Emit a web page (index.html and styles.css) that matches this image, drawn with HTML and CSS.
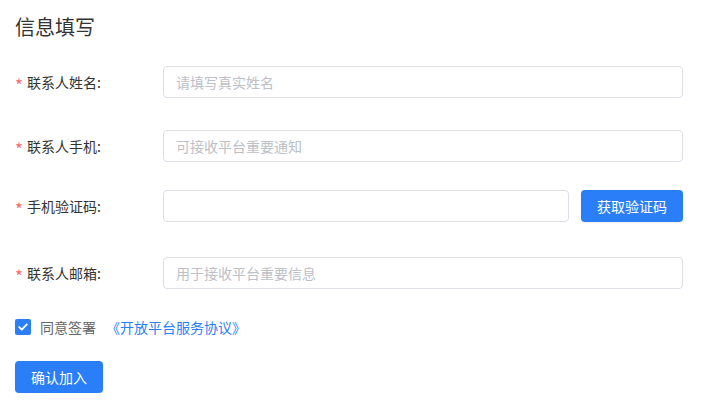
FILE: index.html
```html
<!DOCTYPE html>
<html lang="zh-CN">
<head>
<meta charset="utf-8">
<title>信息填写</title>
<link rel="stylesheet" href="styles.css">
</head>
<body>
<div class="page">
  <h1 class="title">信息填写</h1>
  <form class="form">
    <div class="row row-1">
      <label class="label"><span class="req">*</span>联系人姓名:</label>
      <input class="input" type="text" placeholder="请填写真实姓名">
    </div>
    <div class="row row-2">
      <label class="label"><span class="req">*</span>联系人手机:</label>
      <input class="input" type="text" placeholder="可接收平台重要通知">
    </div>
    <div class="row row-3">
      <label class="label"><span class="req">*</span>手机验证码:</label>
      <div class="code-wrap">
        <input class="input" type="text">
        <button type="button" class="btn btn-code">获取验证码</button>
      </div>
    </div>
    <div class="row row-4">
      <label class="label"><span class="req">*</span>联系人邮箱:</label>
      <input class="input" type="text" placeholder="用于接收平台重要信息">
    </div>
    <div class="agree">
      <span class="checkbox"><svg width="10" height="8" viewBox="0 0 10 8"><path d="M1.2 4.2 L3.8 6.6 L8.8 1.4" fill="none" stroke="#fff" stroke-width="1.8" stroke-linecap="round" stroke-linejoin="round"/></svg></span>
      <span class="agree-text">同意签署</span>
      <a class="agree-link" href="#">《开放平台服务协议》</a>
    </div>
    <button type="button" class="btn btn-submit">确认加入</button>
  </form>
</div>
</body>
</html>
```
FILE: styles.css
```css
html, body {
  margin: 0;
  padding: 0;
  background: #fff;
}
body {
  font-family: "Noto Sans CJK SC", "Noto Sans", sans-serif;
  color: #333;
}
.page {
  padding: 13px 30px 0 15px;
}
.title {
  margin: 0;
  font-size: 20px;
  font-weight: 400;
  line-height: 28px;
  color: #333;
}
.form {
  display: flex;
  flex-direction: column;
  align-items: flex-start;
}
.row {
  display: flex;
  align-items: center;
  width: 668px;
  height: 32px;
}
.row-1 { margin-top: 25px; }
.row-2 { margin-top: 32px; }
.row-3 { margin-top: 28px; }
.row-4 { margin-top: 35px; }
.label {
  width: 148px;
  flex: none;
  font-size: 14px;
  line-height: 20px;
  color: #333;
  display: flex;
  align-items: center;
}
.req {
  color: #f56c6c;
  width: 12px;
  font-size: 17px;
  line-height: 20px;
  position: relative;
  top: 3px;
}
.input {
  flex: 1;
  min-width: 0;
  height: 32px;
  box-sizing: border-box;
  border: 1px solid #dcdfe6;
  border-radius: 4px;
  padding: 0 12px;
  font-family: inherit;
  font-size: 14px;
  color: #333;
  outline: none;
  background: #fff;
}
.input::placeholder {
  color: #bcc0c7;
}
.code-wrap {
  flex: 1;
  display: flex;
  gap: 12px;
  height: 32px;
}
.btn {
  height: 32px;
  border: none;
  border-radius: 4px;
  background: #2a7ff9;
  color: #fff;
  font-family: inherit;
  font-size: 14px;
  padding: 0 16px;
  box-shadow: 0 1px 2px rgba(0, 0, 0, 0.08);
  cursor: pointer;
}
.btn-code {
  flex: none;
  width: 102px;
}
.agree {
  display: flex;
  align-items: center;
  height: 24px;
  margin-top: 26px;
  font-size: 14px;
}
.checkbox {
  width: 16px;
  height: 16px;
  border-radius: 2px;
  background: #2a7ff9;
  display: flex;
  align-items: center;
  justify-content: center;
  margin-right: 9px;
}
.agree-text {
  color: #666;
  margin-right: 10px;
}
.agree-link {
  color: #2a7ff9;
  text-decoration: none;
}
.btn-submit {
  margin-top: 22px;
  width: 88px;
}
```
